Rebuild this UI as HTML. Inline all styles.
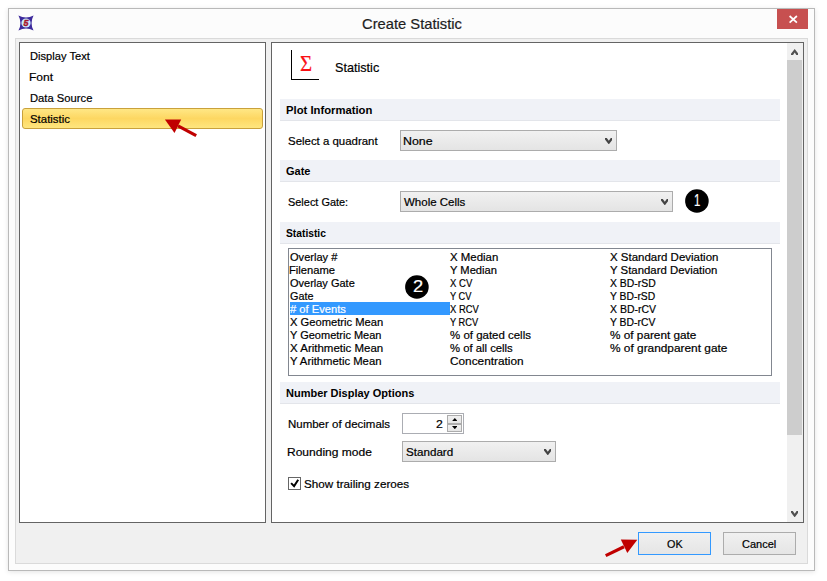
<!DOCTYPE html>
<html lang="en"><head><meta charset="utf-8"><title>Create Statistic</title>
<style>
html,body{margin:0;padding:0;background:#fff;}
body{width:827px;height:581px;position:relative;overflow:hidden;font-family:"Liberation Sans",sans-serif;font-size:12px;color:#000;}
.a{position:absolute;box-sizing:border-box;}
.t{position:absolute;white-space:pre;line-height:normal;transform-origin:0 0;-webkit-text-stroke:0.2px currentColor;}
.bar{position:absolute;left:280px;width:500px;height:22px;background:#f0f2f7;border-bottom:1px solid #e3e5ea;box-sizing:border-box;}
.sel{position:absolute;box-sizing:border-box;border:1px solid #acacac;background:linear-gradient(#f1f1f1,#e4e4e4);}
.btn{position:absolute;box-sizing:border-box;border:1px solid #acacac;background:linear-gradient(#f0f0f0,#e5e5e5);}
</style></head>
<body>
<div class="a" style="left:8px;top:8px;width:807px;height:563px;background:#fcfcfc;border:1px solid #b9b9b9;box-shadow:0 1px 5px rgba(0,0,0,0.11);"></div>
<div class="a" style="left:15px;top:38px;width:793px;height:526px;background:#f0f0f0;border:1px solid #dadada;"></div>
<div class="a" style="left:777px;top:9px;width:31px;height:20px;background:#c75050;"></div>
<svg class="a" style="left:787px;top:13px" width="12" height="12" viewBox="787 13 12 12"><path d="M789.6 16 L796.9 22.7 M796.9 16 L789.6 22.7" stroke="#fff" stroke-width="1.7" fill="none"/></svg>
<svg class="a" style="left:18px;top:15px" width="16" height="16" viewBox="0 0 18 18">
<path d="M0.5 0.5 Q9 5 17.5 0.5 Q13 9 17.5 17.5 Q9 13 0.5 17.5 Q5 9 0.5 0.5Z" fill="#3d2a9c"/>
<circle cx="9" cy="9" r="5.2" fill="#c9ecff"/>
<text x="9" y="12.6" text-anchor="middle" font-family="Liberation Sans, sans-serif" font-size="10" font-weight="700" font-style="italic" fill="#a8142a" stroke="#a8142a" stroke-width="0.5">5</text>
</svg>
<div class="a" style="left:19px;top:42px;width:247px;height:481px;background:#fff;border:1px solid #646464;"></div>
<div class="a" style="left:22px;top:108px;width:241px;height:21px;border:1px solid #c9a13c;border-radius:3px;background:linear-gradient(#ffe785 0%,#fdd762 50%,#fee67f 100%);"></div>
<div class="a" style="left:271px;top:42px;width:533px;height:481px;background:#fff;border:1px solid #646464;"></div>
<div class="a" style="left:787px;top:43px;width:16px;height:479px;background:#f0f0f0;"></div>
<div class="a" style="left:787px;top:60px;width:15px;height:375px;background:#cdcdcd;"></div>
<svg class="a" style="left:790.8px;top:48.7px" width="7.4" height="6.4" viewBox="0 0 7.4 6.4"><path d="M0 0 L1.8 0 L3.70 2.80 L5.60 0 L7.4 0 L7.4 1.6 L3.70 6.4 L0 1.6Z" fill="#505050" transform="translate(0 6.4) scale(1 -1)"/></svg>
<svg class="a" style="left:790.8px;top:510.9px" width="7.4" height="6.4" viewBox="0 0 7.4 6.4"><path d="M0 0 L1.8 0 L3.70 2.80 L5.60 0 L7.4 0 L7.4 1.6 L3.70 6.4 L0 1.6Z" fill="#505050"/></svg>
<div class="a" style="left:291px;top:50px;width:28px;height:30px;border-left:1px solid #000;border-bottom:1px solid #000;"></div>
<span class="t" style="left:300.1px;top:51.0px;font-family:'Liberation Serif',serif;font-size:22.7px;color:#fa0f14;line-height:normal;transform:scaleX(0.92)">Σ</span>
<div class="bar" style="top:99px"></div>
<div class="bar" style="top:160px"></div>
<div class="bar" style="top:222px"></div>
<div class="bar" style="top:382px"></div>
<div class="sel" style="left:400px;top:130px;width:217px;height:21px;"></div>
<svg class="a" style="left:604.5px;top:137.7px" width="7.6" height="6.4" viewBox="0 0 7.6 6.4"><path d="M0 0 L1.8 0 L3.80 2.80 L5.80 0 L7.6 0 L7.6 1.6 L3.80 6.4 L0 1.6Z" fill="#444444"/></svg>
<div class="sel" style="left:400px;top:191px;width:273px;height:21px;"></div>
<svg class="a" style="left:660.6px;top:198.7px" width="7.6" height="6.4" viewBox="0 0 7.6 6.4"><path d="M0 0 L1.8 0 L3.80 2.80 L5.80 0 L7.6 0 L7.6 1.6 L3.80 6.4 L0 1.6Z" fill="#444444"/></svg>
<div class="sel" style="left:402px;top:441px;width:154px;height:21px;"></div>
<svg class="a" style="left:543.5px;top:448.7px" width="7.6" height="6.4" viewBox="0 0 7.6 6.4"><path d="M0 0 L1.8 0 L3.80 2.80 L5.80 0 L7.6 0 L7.6 1.6 L3.80 6.4 L0 1.6Z" fill="#444444"/></svg>
<svg class="a" style="left:684px;top:188px" width="26" height="26" viewBox="684 188 26 26"><circle cx="696.9" cy="201" r="11.8" fill="#000"/></svg>
<div class="a" style="left:288px;top:248px;width:484px;height:128px;background:#fff;border:1px solid #828790;"></div>
<div class="a" style="left:290px;top:302px;width:160px;height:13px;background:#3399ff;"></div>
<svg class="a" style="left:404px;top:274px" width="26" height="26" viewBox="404 274 26 26"><circle cx="416.9" cy="287" r="11.8" fill="#000"/></svg>
<div class="a" style="left:402px;top:413px;width:62px;height:21px;background:#fff;border:1px solid #abadb3;"></div>
<div class="btn" style="left:447px;top:415px;width:15px;height:9px;"></div>
<div class="btn" style="left:447px;top:424px;width:15px;height:8px;"></div>
<svg class="a" style="left:451.7px;top:418px" width="5.6" height="3.2" viewBox="0 0 7 4"><path d="M0 4 L3.5 0 L7 4Z" fill="#000"/></svg>
<svg class="a" style="left:451.7px;top:426px" width="5.6" height="3.2" viewBox="0 0 7 4"><path d="M0 0 L3.5 4 L7 0Z" fill="#000"/></svg>
<div class="a" style="left:288px;top:477px;width:13px;height:13px;background:#fff;border:1px solid #666;"></div>
<svg class="a" style="left:288px;top:477px" width="13" height="13" viewBox="0 0 13 13"><path d="M3.1 6.1 L6.1 9.1 L10.2 2.8" fill="none" stroke="#000" stroke-width="2"/></svg>
<div class="btn" style="left:638px;top:532px;width:73px;height:23px;border-color:#3399ff;"></div>
<div class="btn" style="left:723px;top:532px;width:73px;height:23px;"></div>
<svg class="a" style="left:150px;top:104px" width="60" height="42" viewBox="150 104 60 42"><path d="M196.2 135.7 L178 125.8" stroke="#c00000" stroke-width="3.2" fill="none"/><path d="M164.9 119.4 L181.2 119.4 L174.5 132.9Z" fill="#c00000"/></svg>
<svg class="a" style="left:595px;top:525px" width="60" height="42" viewBox="595 525 60 42"><path d="M605.7 555.6 L624 546.8" stroke="#c00000" stroke-width="3.2" fill="none"/><path d="M620.8 539.5 L637.3 539.7 L627.3 552.9Z" fill="#c00000"/></svg>
<span class="t" style="left:361.76px;top:15.42px;font-size:15px;color:#1e1e1e;transform:scaleX(0.9821);">Create Statistic</span>
<span class="t" style="left:29.53px;top:49.59px;font-size:11.5px;transform:scaleX(0.9679);">Display Text</span>
<span class="t" style="left:29.45px;top:70.59px;font-size:11.5px;transform:scaleX(1.0455);">Font</span>
<span class="t" style="left:29.52px;top:91.59px;font-size:11.5px;transform:scaleX(0.9760);">Data Source</span>
<span class="t" style="left:30.00px;top:112.59px;font-size:11.5px;transform:scaleX(0.9924);">Statistic</span>
<span class="t" style="left:334.79px;top:59.96px;font-size:13.3px;transform:scaleX(0.9495);">Statistic</span>
<span class="t" style="left:285.77px;top:103.59px;font-size:11.5px;font-weight:700;-webkit-text-stroke:0;transform:scaleX(0.9798);">Plot Information</span>
<span class="t" style="left:286.02px;top:164.59px;font-size:11.5px;font-weight:700;-webkit-text-stroke:0;transform:scaleX(0.9576);">Gate</span>
<span class="t" style="left:286.28px;top:226.59px;font-size:11.5px;font-weight:700;-webkit-text-stroke:0;transform:scaleX(0.8927);">Statistic</span>
<span class="t" style="left:285.78px;top:386.59px;font-size:11.5px;font-weight:700;-webkit-text-stroke:0;transform:scaleX(0.9564);">Number Display Options</span>
<span class="t" style="left:288.00px;top:134.59px;font-size:11.5px;transform:scaleX(0.9944);">Select a quadrant</span>
<span class="t" style="left:402.92px;top:134.59px;font-size:11.5px;transform:scaleX(1.0769);">None</span>
<span class="t" style="left:288.02px;top:195.59px;font-size:11.5px;transform:scaleX(0.9506);">Select Gate:</span>
<span class="t" style="left:404.00px;top:195.59px;font-size:11.5px;transform:scaleX(1.0000);">Whole Cells</span>
<span class="t" style="left:287.50px;top:417.59px;font-size:11.5px;transform:scaleX(0.9980);">Number of decimals</span>
<span class="t" style="left:435.67px;top:417.59px;font-size:11.5px;transform:scaleX(1.0667);">2</span>
<span class="t" style="left:287.45px;top:445.59px;font-size:11.5px;transform:scaleX(1.0458);">Rounding mode</span>
<span class="t" style="left:405.99px;top:445.59px;font-size:11.5px;transform:scaleX(1.0110);">Standard</span>
<span class="t" style="left:303.89px;top:477.59px;font-size:11.5px;transform:scaleX(1.0151);">Show trailing zeroes</span>
<span class="t" style="left:694.11px;top:191.52px;font-size:16px;color:#fff;transform:scaleX(0.7143);">1</span>
<span class="t" style="left:413.04px;top:277.62px;font-size:16px;color:#fff;transform:scaleX(1.1448);">2</span>
<span class="t" style="left:666.93px;top:537.59px;font-size:11.5px;transform:scaleX(0.9375);">OK</span>
<span class="t" style="left:741.92px;top:537.59px;font-size:11.5px;transform:scaleX(0.9565);">Cancel</span>
<span class="t" style="left:289.92px;top:250.59px;font-size:11.5px;transform:scaleX(0.9621);">Overlay #</span>
<span class="t" style="left:289.43px;top:263.59px;font-size:11.5px;transform:scaleX(0.9749);">Filename</span>
<span class="t" style="left:289.92px;top:276.59px;font-size:11.5px;transform:scaleX(0.9558);">Overlay Gate</span>
<span class="t" style="left:289.93px;top:289.59px;font-size:11.5px;transform:scaleX(0.9417);">Gate</span>
<span class="t" style="left:290.40px;top:302.59px;font-size:11.5px;color:#fff;transform:scaleX(0.9712);"># of Events</span>
<span class="t" style="left:290.16px;top:315.59px;font-size:11.5px;transform:scaleX(0.9726);">X Geometric Mean</span>
<span class="t" style="left:290.16px;top:328.59px;font-size:11.5px;transform:scaleX(0.9562);">Y Geometric Mean</span>
<span class="t" style="left:290.15px;top:341.59px;font-size:11.5px;transform:scaleX(0.9989);">X Arithmetic Mean</span>
<span class="t" style="left:290.15px;top:354.59px;font-size:11.5px;transform:scaleX(0.9821);">Y Arithmetic Mean</span>
<span class="t" style="left:449.95px;top:250.59px;font-size:11.5px;transform:scaleX(0.9927);">X Median</span>
<span class="t" style="left:449.96px;top:263.59px;font-size:11.5px;transform:scaleX(0.9705);">Y Median</span>
<span class="t" style="left:449.99px;top:276.59px;font-size:11.5px;transform:scaleX(0.8302);">X CV</span>
<span class="t" style="left:450.00px;top:289.59px;font-size:11.5px;transform:scaleX(0.8076);">Y CV</span>
<span class="t" style="left:449.99px;top:302.59px;font-size:11.5px;transform:scaleX(0.8201);">X RCV</span>
<span class="t" style="left:450.00px;top:315.59px;font-size:11.5px;transform:scaleX(0.8058);">Y RCV</span>
<span class="t" style="left:449.70px;top:328.59px;font-size:11.5px;transform:scaleX(0.9969);">% of gated cells</span>
<span class="t" style="left:449.71px;top:341.59px;font-size:11.5px;transform:scaleX(0.9810);">% of all cells</span>
<span class="t" style="left:450.49px;top:354.59px;font-size:11.5px;transform:scaleX(1.0270);">Concentration</span>
<span class="t" style="left:610.25px;top:250.59px;font-size:11.5px;transform:scaleX(0.9977);">X Standard Deviation</span>
<span class="t" style="left:610.25px;top:263.59px;font-size:11.5px;transform:scaleX(0.9907);">Y Standard Deviation</span>
<span class="t" style="left:610.27px;top:276.59px;font-size:11.5px;transform:scaleX(0.9065);">X BD-rSD</span>
<span class="t" style="left:610.28px;top:289.59px;font-size:11.5px;transform:scaleX(0.8990);">Y BD-rSD</span>
<span class="t" style="left:610.27px;top:302.59px;font-size:11.5px;transform:scaleX(0.9114);">X BD-rCV</span>
<span class="t" style="left:610.27px;top:315.59px;font-size:11.5px;transform:scaleX(0.9020);">Y BD-rCV</span>
<span class="t" style="left:609.99px;top:328.59px;font-size:11.5px;transform:scaleX(1.0240);">% of parent gate</span>
<span class="t" style="left:609.98px;top:341.59px;font-size:11.5px;transform:scaleX(1.0315);">% of grandparent gate</span>
</body></html>
